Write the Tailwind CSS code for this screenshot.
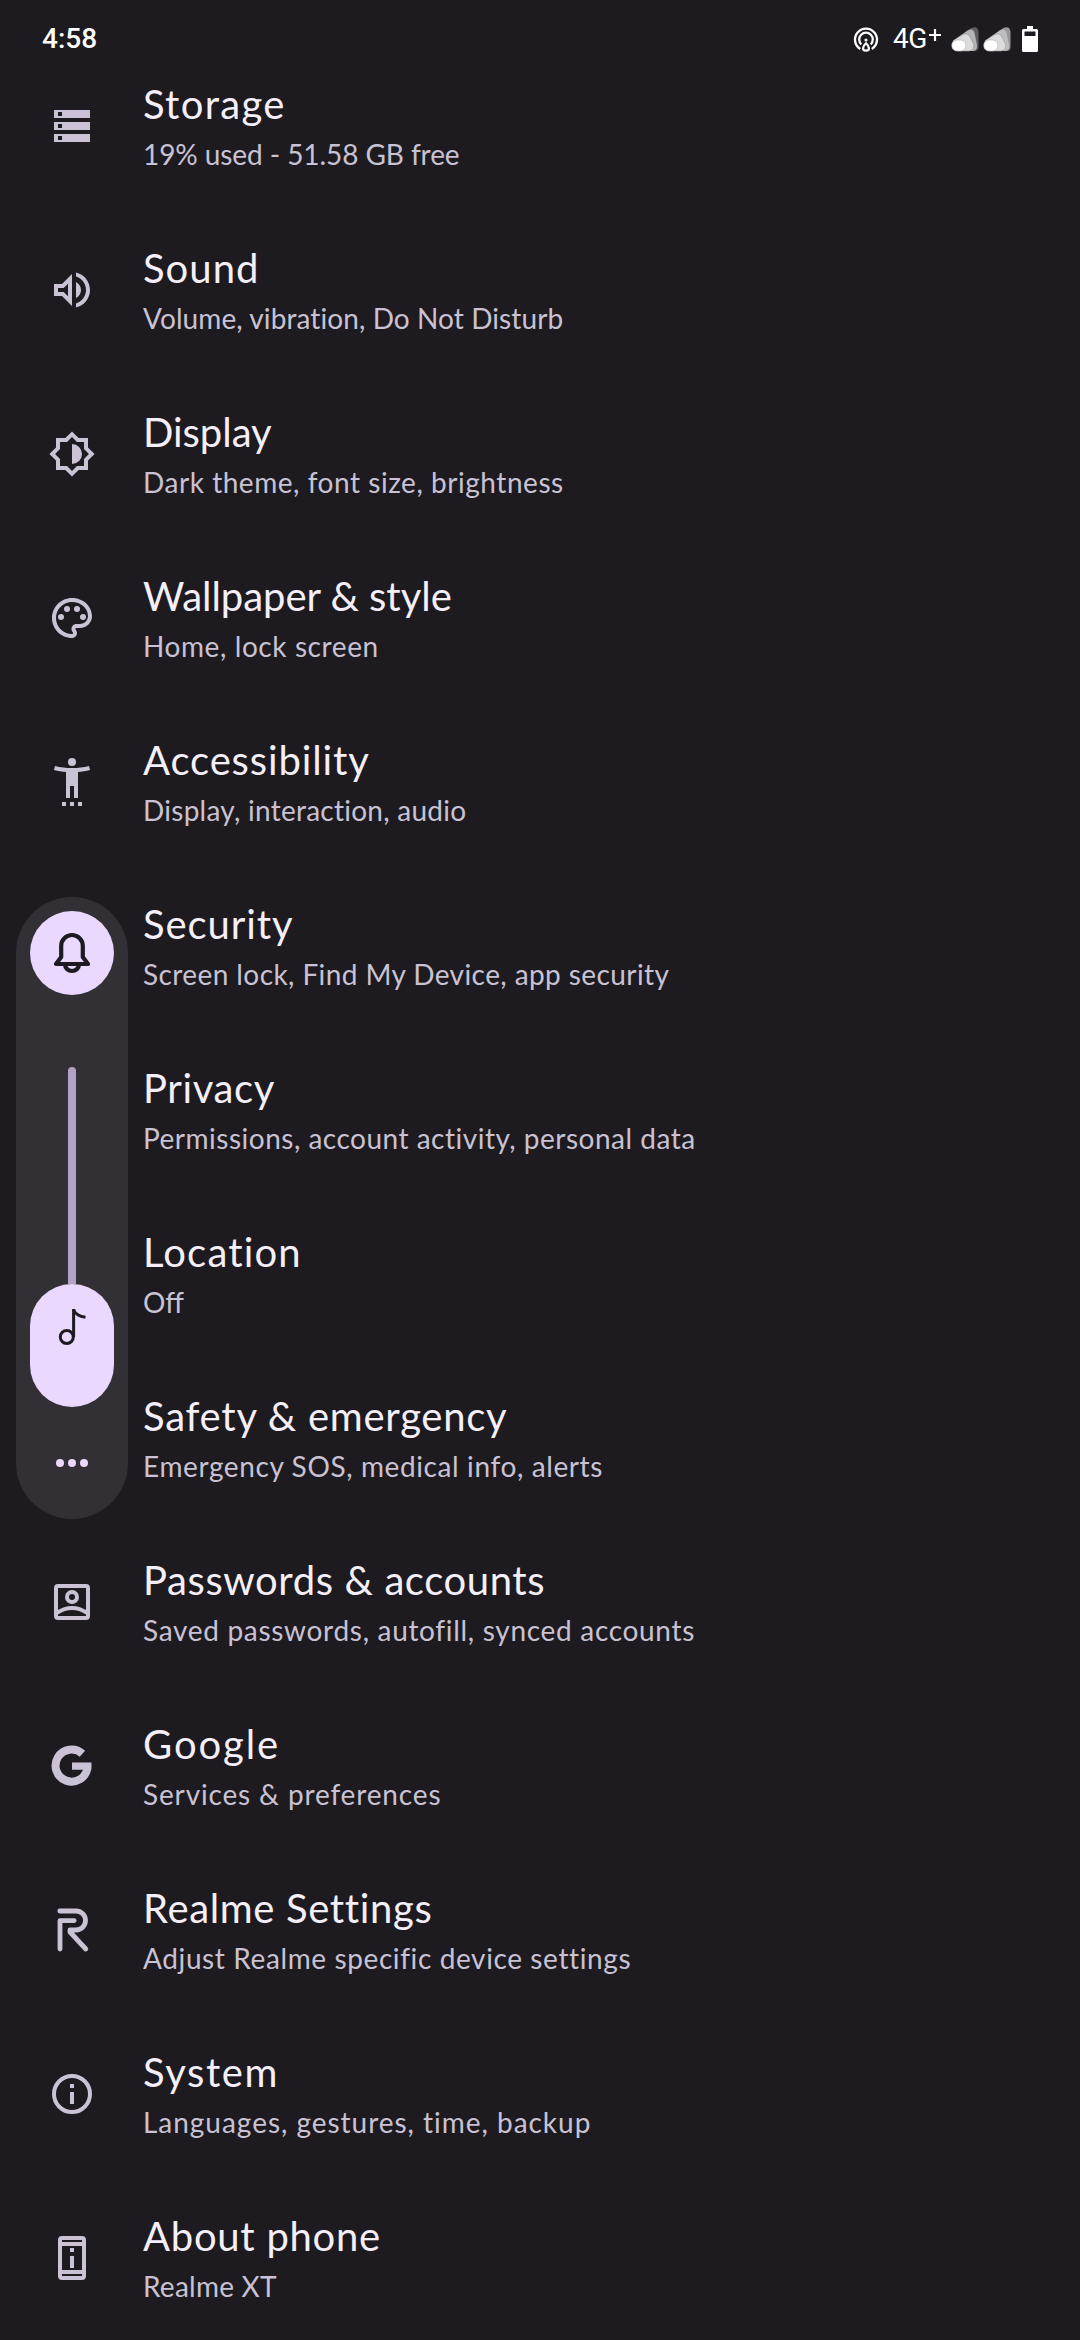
<!DOCTYPE html>
<html lang="en">
<head>
<meta charset="utf-8">
<title>Settings</title>
<script src="https://cdn.jsdelivr.net/npm/@tailwindcss/browser@4"></script>
</head>
<body class="bg-[#1d1b20]">
<div class="relative flex h-[2340px] w-[1080px] flex-col overflow-hidden bg-[#1d1b20] font-['Lato',sans-serif]">

  <!-- Status bar -->
  <header class="flex h-[78px] shrink-0 items-center justify-between pr-[42px] pl-[42px] font-['Roboto',sans-serif] text-white">
    <div class="text-[28px] leading-8 font-medium">4:58</div>
    <div class="flex items-center">
      <svg class="mr-[14px] h-[26px] w-[26px]" viewBox="0 0 26 26" fill="none" stroke="#fff" stroke-width="2.3">
        <path d="M7.2 22.9A11 11 0 1 1 18.8 22.9"/>
        <path d="M8.3 18.4A6.8 6.8 0 1 1 17.7 18.4"/>
        <circle cx="13" cy="14" r="1.6" fill="#fff" stroke="none"/>
        <path d="M13 17.2c2 1.8 3 3.600 3 5 0 1.600-1.300 2.500-3 2.500s-3-.9-3-2.500c0-1.400 1-3.200 3-5z" stroke-width="2.200"/>
      </svg>
      <div class="flex w-[58px] items-center text-[28px] leading-8">
        <span class="-tracking-[0.5px]">4G</span>
        <svg class="-mt-[8px] ml-[1px] h-[14px] w-[14px]" viewBox="0 0 14 14" stroke="#fff" stroke-width="2.200"><path d="M7 1v12M1 7h12"/></svg>
      </div>
      <svg class="h-[26px] w-[28px]" viewBox="0 0 28 26">
        <path d="M2.500 14.500 20 2.200Q27 -1 27.500 6V21Q27.500 25 23 25H7Q0 24.500 1 18Z" fill="#605e63"/>
        <path d="M2.500 14.500 17 4.300Q22 2 23.500 7L26 19Q26.500 25 21 25H7Q0 24.500 1 18Z" fill="#b4b3b5"/>
        <path d="M2.500 14.500 12 8.500Q17 6.500 19 11L22.500 18Q24 24 18 25H7Q0 24.500 1 18Z" fill="#dcdcdd" stroke="#96959a" stroke-width=".6"/>
        <rect x=".8" y="14" width="14" height="11" rx="5.500" fill="#fff" stroke="#a5a4a8" stroke-width=".5"/>
      </svg>
      <svg class="ml-[4px] h-[26px] w-[28px]" viewBox="0 0 28 26">
        <path d="M2.500 14.500 20 2.200Q27 -1 27.500 6V21Q27.500 25 23 25H7Q0 24.500 1 18Z" fill="#98979a"/>
        <path d="M2.500 14.500 17 4.300Q22 2 23.500 7L26 19Q26.500 25 21 25H7Q0 24.500 1 18Z" fill="#bebdbf"/>
        <path d="M2.500 14.500 12 8.500Q17 6.500 19 11L22.500 18Q24 24 18 25H7Q0 24.500 1 18Z" fill="#dcdcdd" stroke="#96959a" stroke-width=".6"/>
        <rect x=".8" y="14" width="14" height="11" rx="5.500" fill="#fff" stroke="#a5a4a8" stroke-width=".5"/>
      </svg>
      <svg class="ml-[11px] h-[26px] w-[16px]" viewBox="0 0 16 26"><path fill="#fff" fill-rule="evenodd" d="M5 0h6v3h3.500A1.500 1.500 0 0 1 16 4.500v20a1.500 1.500 0 0 1-1.500 1.500h-13A1.500 1.500 0 0 1 0 24.500v-20A1.500 1.500 0 0 1 1.500 3H5zM2.500 5.500v4.500h11V5.500z"/></svg>
    </div>
  </header>

  <!-- Settings list -->
  <main class="flex flex-col text-[#c9c2d3]">
    <div class="flex h-[164px] shrink-0 items-start">
      <svg class="mt-6 ml-12 h-12 w-12 shrink-0" viewBox="0 0 24 24" fill="#cbc3d5" fill-rule="evenodd"><path d="M3 4h18v4H3zm2 1v2h2V5zM3 10h18v4H3zm2 1v2h2v-2zM3 16h18v4H3zm2 1v2h2v-2z"/></svg>
      <div class="ml-[47px] whitespace-nowrap">
        <div class="text-[40px] leading-[52px] tracking-[1.31px] text-[#f4eff8]">Storage</div>
        <div class="text-[28px] leading-[48px] -tracking-[0.08px]">19% used - 51.58 GB free</div>
      </div>
    </div>
    <div class="flex h-[164px] shrink-0 items-start">
      <svg class="mt-6 ml-12 h-12 w-12 shrink-0" viewBox="0 0 24 24" fill="#cbc3d5"><path d="M3 9v6h4l5 5V4L7 9H3zm7-.17v6.34L7.830 13H5v-2h2.830L10 8.830zM16.500 12c0-1.770-1.020-3.290-2.500-4.030v8.050c1.480-.73 2.500-2.250 2.500-4.020zM14 3.230v2.060c2.890.86 5 3.540 5 6.710s-2.110 5.850-5 6.710v2.060c4.010-.91 7-4.490 7-8.770s-2.990-7.860-7-8.770z"/></svg>
      <div class="ml-[47px] whitespace-nowrap">
        <div class="text-[40px] leading-[52px] tracking-[1.03px] text-[#f4eff8]">Sound</div>
        <div class="text-[28px] leading-[48px] tracking-[0.09px]">Volume, vibration, Do Not Disturb</div>
      </div>
    </div>
    <div class="flex h-[164px] shrink-0 items-start">
      <svg class="mt-6 ml-12 h-12 w-12 shrink-0" viewBox="0 0 24 24" fill="#cbc3d5"><path fill-rule="evenodd" d="M20 15.310L23.310 12 20 8.690V4h-4.690L12 .69 8.690 4H4v4.690L.69 12 4 15.310V20h4.690L12 23.310 15.310 20H20zM18 14.480V18h-3.520L12 20.480 9.520 18H6v-3.520L3.520 12 6 9.520V6h3.520L12 3.520 14.480 6H18v3.520L20.480 12z"/><path d="M12 7v10a5 5 0 0 0 0-10z"/></svg>
      <div class="ml-[47px] whitespace-nowrap">
        <div class="text-[40px] leading-[52px] -tracking-[0.03px] text-[#f4eff8]">Display</div>
        <div class="text-[28px] leading-[48px] tracking-[0.54px]">Dark theme, font size, brightness</div>
      </div>
    </div>
    <div class="flex h-[164px] shrink-0 items-start">
      <svg class="mt-6 ml-12 h-12 w-12 shrink-0" viewBox="0 0 24 24" fill="#cbc3d5"><path d="M12 22C6.490 22 2 17.510 2 12S6.490 2 12 2s10 4.040 10 9c0 3.310-2.690 6-6 6h-1.770c-.28 0-.5.22-.5.5 0 .12.05.23.13.33.41.47.64 1.060.64 1.670 0 1.380-1.120 2.500-2.500 2.500zm0-18c-4.410 0-8 3.590-8 8s3.590 8 8 8c.28 0 .5-.22.5-.5 0-.16-.08-.28-.14-.35-.41-.46-.63-1.050-.63-1.650 0-1.380 1.120-2.500 2.500-2.500H16c2.210 0 4-1.790 4-4 0-3.860-3.590-7-8-7z"/><circle cx="6.500" cy="11.500" r="1.500"/><circle cx="9.500" cy="7.500" r="1.500"/><circle cx="14.500" cy="7.500" r="1.500"/><circle cx="17.500" cy="11.500" r="1.500"/></svg>
      <div class="ml-[47px] whitespace-nowrap">
        <div class="text-[40px] leading-[52px] -tracking-[0.03px] text-[#f4eff8]">Wallpaper &amp; style</div>
        <div class="text-[28px] leading-[48px] tracking-[0.59px]">Home, lock screen</div>
      </div>
    </div>
    <div class="flex h-[164px] shrink-0 items-start">
      <svg class="mt-6 ml-12 h-12 w-12 shrink-0" viewBox="0 0 24 24" fill="#cbc3d5"><path d="M20.500 4c-2.610.7-5.670 1-8.500 1s-5.890-.3-8.500-1L3 6c1.860.5 4 .83 6 1v13h2v-6h2v6h2V7c2-.17 4.140-.5 6-1l-.5-2zM7 22h2v2H7zm4 0h2v2h-2zm4 0h2v2h-2z"/><circle cx="12" cy="2" r="2"/></svg>
      <div class="ml-[47px] whitespace-nowrap">
        <div class="text-[40px] leading-[52px] tracking-[0.87px] text-[#f4eff8]">Accessibility</div>
        <div class="text-[28px] leading-[48px] tracking-[0.26px]">Display, interaction, audio</div>
      </div>
    </div>
    <div class="ml-[143px] h-[164px] shrink-0 whitespace-nowrap">
      <div class="text-[40px] leading-[52px] tracking-[0.91px] text-[#f4eff8]">Security</div>
      <div class="text-[28px] leading-[48px] tracking-[0.41px]">Screen lock, Find My Device, app security</div>
    </div>
    <div class="ml-[143px] h-[164px] shrink-0 whitespace-nowrap">
      <div class="text-[40px] leading-[52px] tracking-[0.62px] text-[#f4eff8]">Privacy</div>
      <div class="text-[28px] leading-[48px] tracking-[0.5px]">Permissions, account activity, personal data</div>
    </div>
    <div class="ml-[143px] h-[164px] shrink-0 whitespace-nowrap">
      <div class="text-[40px] leading-[52px] tracking-[1.18px] text-[#f4eff8]">Location</div>
      <div class="text-[28px] leading-[48px]">Off</div>
    </div>
    <div class="ml-[143px] h-[164px] shrink-0 whitespace-nowrap">
      <div class="text-[40px] leading-[52px] tracking-[0.74px] text-[#f4eff8]">Safety &amp; emergency</div>
      <div class="text-[28px] leading-[48px] tracking-[0.61px]">Emergency SOS, medical info, alerts</div>
    </div>
    <div class="flex h-[164px] shrink-0 items-start">
      <svg class="mt-6 ml-12 h-12 w-12 shrink-0" viewBox="0 0 24 24" fill="none" stroke="#cbc3d5" stroke-width="2"><rect x="4" y="4" width="16" height="16" rx="1"/><circle cx="12" cy="9.500" r="2.500"/><path d="M4.500 17.400Q12 12.600 19.500 17.400"/></svg>
      <div class="ml-[47px] whitespace-nowrap">
        <div class="text-[40px] leading-[52px] tracking-[0.6px] text-[#f4eff8]">Passwords &amp; accounts</div>
        <div class="text-[28px] leading-[48px] tracking-[0.69px]">Saved passwords, autofill, synced accounts</div>
      </div>
    </div>
    <div class="flex h-[164px] shrink-0 items-start">
      <svg class="mt-6 ml-12 h-12 w-12 shrink-0" viewBox="0 0 24 24"><path d="M17.200 5.900A8 8 0 1 0 19.700 13" fill="none" stroke="#cbc3d5" stroke-width="4"/><path d="M12 10.200h9.700q.2 1.900-.1 3.700H12z" fill="#cbc3d5"/></svg>
      <div class="ml-[47px] whitespace-nowrap">
        <div class="text-[40px] leading-[52px] tracking-[1.9px] text-[#f4eff8]">Google</div>
        <div class="text-[28px] leading-[48px] tracking-[0.85px]">Services &amp; preferences</div>
      </div>
    </div>
    <div class="flex h-[164px] shrink-0 items-start">
      <svg class="mt-6 ml-12 h-12 w-12 shrink-0" viewBox="0 0 24 24" fill="none" stroke="#cbc3d5" stroke-width="2.400" stroke-linecap="round" stroke-linejoin="round"><path d="M5.900 2.500H14a4.700 4.700 0 0 1 0 9.500h-3v1l7.900 8.500"/><path d="M6 21.500V7.300h7.100"/></svg>
      <div class="ml-[47px] whitespace-nowrap">
        <div class="text-[40px] leading-[52px] tracking-[0.64px] text-[#f4eff8]">Realme Settings</div>
        <div class="text-[28px] leading-[48px] tracking-[0.61px]">Adjust Realme specific device settings</div>
      </div>
    </div>
    <div class="flex h-[164px] shrink-0 items-start">
      <svg class="mt-6 ml-12 h-12 w-12 shrink-0" viewBox="0 0 24 24" fill="#cbc3d5"><circle cx="12" cy="12" r="9" fill="none" stroke="#cbc3d5" stroke-width="2"/><path d="M11 7h2v2h-2zm0 4h2v6h-2z"/></svg>
      <div class="ml-[47px] whitespace-nowrap">
        <div class="text-[40px] leading-[52px] tracking-[1.56px] text-[#f4eff8]">System</div>
        <div class="text-[28px] leading-[48px] tracking-[0.97px]">Languages, gestures, time, backup</div>
      </div>
    </div>
    <div class="flex h-[130px] shrink-0 items-start">
      <svg class="mt-6 ml-12 h-12 w-12 shrink-0" viewBox="0 0 24 24" fill="#cbc3d5" fill-rule="evenodd"><path d="M7 1h10a2 2 0 0 1 2 2v18a2 2 0 0 1-2 2H7a2 2 0 0 1-2-2V3a2 2 0 0 1 2-2zM7 3v1h10V3zM7 6v12h10V6zM7 20v1h10v-1z"/><path d="M11 7h2v2h-2zm0 4h2v6h-2z"/></svg>
      <div class="ml-[47px] whitespace-nowrap">
        <div class="text-[40px] leading-[52px] tracking-[0.74px] text-[#f4eff8]">About phone</div>
        <div class="text-[28px] leading-[48px] tracking-[0.24px]">Realme XT</div>
      </div>
    </div>
  </main>

  <!-- Volume panel overlay -->
  <aside class="absolute top-[897px] left-4 flex h-[622px] w-28 flex-col items-center rounded-full bg-[#322f35] pt-[14px]">
    <div class="flex h-[84px] w-[84px] shrink-0 items-center justify-center rounded-full bg-[#ead8ff]">
      <svg class="h-12 w-12" viewBox="0 0 24 24" fill="none" stroke="#1d1b20" stroke-width="2.100" stroke-linejoin="round"><path d="M4 17.500 6.600 14V8.400a5.400 5.400 0 0 1 10.800 0V14l2.600 3.500z"/><path d="M8.500 17.800A3.500 3.200 0 0 0 15.500 17.800"/></svg>
    </div>
    <div class="mt-[72px] h-[217px] w-2 shrink-0 rounded-t-full bg-[#b2a2c5]"></div>
    <div class="flex h-[123px] w-[84px] shrink-0 justify-center rounded-full bg-[#ead8ff]">
      <svg class="mt-[22px] h-[42px] w-[32px]" viewBox="0 0 32 42" fill="none" stroke="#1d1b20" stroke-width="3"><circle cx="10.800" cy="31" r="6.500"/><path d="M17.600 31V3"/><path d="M17.500 3.500C19 7.500 23 10.500 29.500 11.200"/></svg>
    </div>
    <div class="mt-[52px] flex gap-1">
      <span class="h-2 w-2 rounded-full bg-[#ead8ff]"></span>
      <span class="h-2 w-2 rounded-full bg-[#ead8ff]"></span>
      <span class="h-2 w-2 rounded-full bg-[#ead8ff]"></span>
    </div>
  </aside>
</div>
</body>
</html>
